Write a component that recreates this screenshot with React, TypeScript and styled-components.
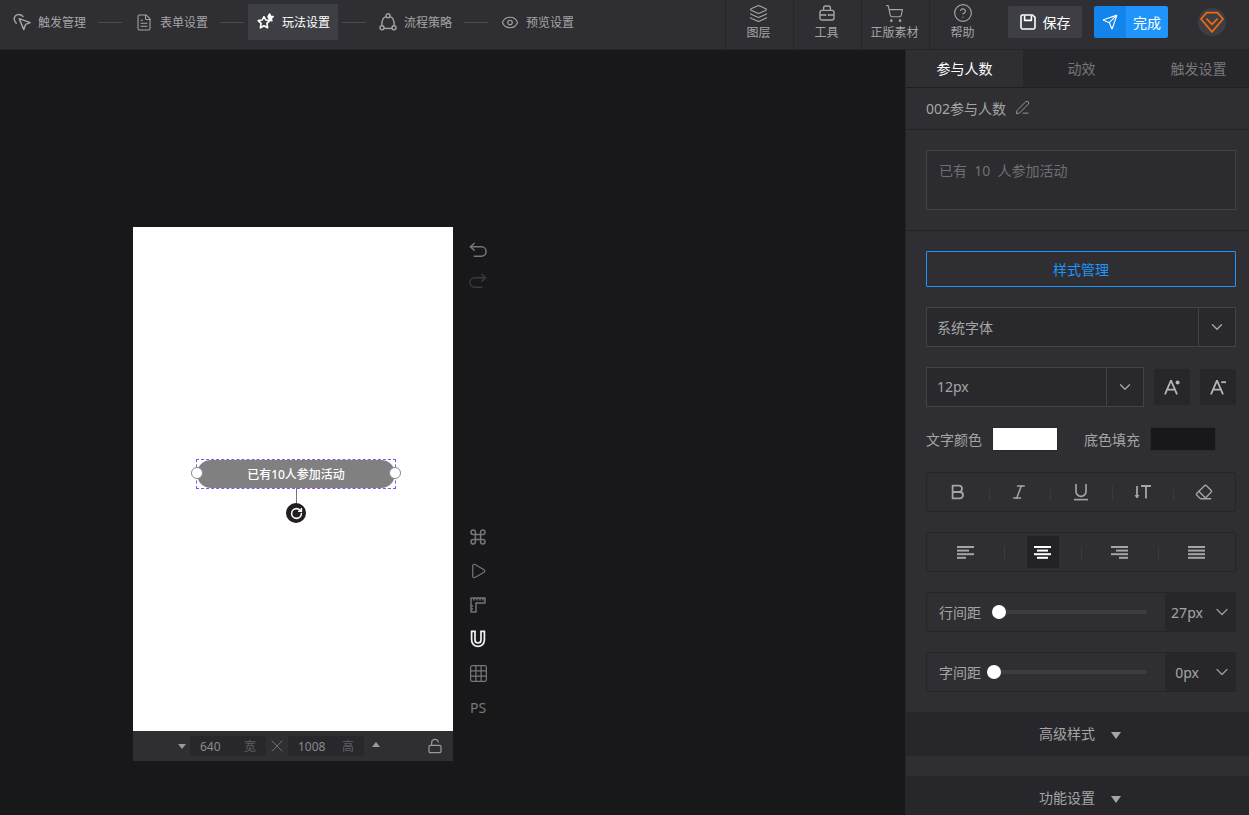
import React from 'react'
import styled, { createGlobalStyle } from 'styled-components'
import { ChevronDown, CircleHelp, Eraser, Eye, FileText, Grid3x3, Italic, Layers, LockOpen, PenLine, Play, RotateCw, Send, ShoppingCart, X } from 'lucide-react'

const GlobalStyle = createGlobalStyle`
    * { box-sizing: border-box; }
    html, body { margin: 0; height: 100%; background: #18181a; overflow: hidden; }
    body { font-family: "Noto Sans", "Noto Sans CJK SC", sans-serif; font-size: 14px; color: #aaa; }
`

const PointerIcon = () => (
    <svg width="18" height="18" viewBox="0 0 18 18" fill="none" stroke="currentColor" strokeWidth="1.5" strokeLinejoin="round" strokeLinecap="round">
        <path d="M3.2 10.2A6 6 0 0 1 1.2 5.8 4.4 4.4 0 0 1 5.6 1.4a6 6 0 0 1 4.4 2" />
        <path d="M6.2 5.6l11 4-4.6 1.8-1.8 5.2z" />
    </svg>
)

const StarsIcon = () => (
    <svg width="18" height="18" viewBox="0 0 18 18" fill="none" stroke="currentColor" strokeWidth="1.6" strokeLinejoin="round">
        <path d="M7 3.6l1.8 3.4 4 .6-2.9 2.8.7 4.4-3.6-2-3.6 2 .7-4.4L1.2 7.6l4-.6z" />
        <path d="M12.6 1l1 2.2 2.6.3-1.9 1.8.5 2.5-2.2-1.2-1.6-2.8z" fill="currentColor" />
    </svg>
)

const FlowIcon = () => (
    <svg width="18" height="18" viewBox="0 0 18 18" fill="none" stroke="currentColor" strokeWidth="1.4">
        <path d="M6.8 3.6C4 4.6 2.6 7.6 2.8 12.6" />
        <path d="M11.2 3.6c2.8 1 4.2 4 4 9" />
        <path d="M5 15.4h8" />
        <circle cx="9" cy="2.8" r="2" />
        <circle cx="3" cy="14.8" r="2" />
        <circle cx="15" cy="14.8" r="2" />
    </svg>
)

const ToolboxIcon = () => (
    <svg width="16" height="16" viewBox="0 0 16 16" fill="none" stroke="currentColor" strokeWidth="1.4">
        <path d="M4.6 5.4V3A2 2 0 0 1 6.6 1h2.8a2 2 0 0 1 2 2v2.4" />
        <rect x="1" y="5.4" width="14" height="9.6" rx="2" />
        <path d="M1 10h4.6M10.4 10H15M6.4 9v2M9.6 9v2" />
    </svg>
)

const SaveBoxIcon = () => (
    <svg width="16" height="16" viewBox="0 0 16 16" fill="none" stroke="currentColor" strokeWidth="1.6" strokeLinejoin="round">
        <path d="M2.4 1h10.2L15 3.4v9.8A1.8 1.8 0 0 1 13.2 15H2.8A1.8 1.8 0 0 1 1 13.2V2.4A1.4 1.4 0 0 1 2.4 1z" />
        <path d="M4.6 1.4v5h6.8v-5" />
    </svg>
)

const GemLogo = () => (
    <svg width="28" height="28" viewBox="0 0 28 28" fill="none">
        <circle cx="14" cy="14" r="14" fill="#3d3e44" />
        <path d="M8.6 4.6h10.8l5.6 6.4L14 23.8 3 11z" stroke="#f0680c" strokeWidth="1.8" strokeLinejoin="round" />
        <path d="M8.4 10.6l5.6 5.8 5.6-5.8" stroke="#f0680c" strokeWidth="1.8" strokeLinejoin="round" />
    </svg>
)

const HistoryIcon = ({ flip }: { flip?: boolean }) => (
    <svg width="18" height="16" viewBox="0 0 18 16" fill="none" stroke="currentColor" strokeWidth="1.5" transform={flip ? 'scale(-1 1)' : undefined}>
        <path d="M5.6 1L1.4 4.8l4.2 3.8" />
        <path d="M1.4 4.8h11a4.4 4.4 0 0 1 0 9.4H4.6" />
    </svg>
)

const CommandIcon = () => (
    <svg width="16" height="16" viewBox="0 0 16 16" fill="none" stroke="currentColor" strokeWidth="1.5">
        <path d="M5.4 5.4h5.2v5.2H5.4zM5.4 5.4V3.2a2.2 2.2 0 1 0-2.2 2.2zM10.6 5.4h2.2a2.2 2.2 0 1 0-2.2-2.2zM5.4 10.6H3.2a2.2 2.2 0 1 0 2.2 2.2zM10.6 10.6v2.2a2.2 2.2 0 1 0 2.2-2.2z" />
    </svg>
)

const RulerIcon = () => (
    <svg width="16" height="16" viewBox="0 0 16 16" fill="none" stroke="currentColor" strokeWidth="1.4" strokeLinejoin="round">
        <path d="M1 1h14v5H6v9H1z" />
        <path d="M4 1v2.4M7 1v2.4M10 1v2.4M13 1v2.4M1 9h2M1 12h2" />
    </svg>
)

const MagnetIcon = () => (
    <svg width="16" height="18" viewBox="0 0 16 18" fill="none" stroke="currentColor" strokeWidth="1.7">
        <path d="M1.6 1.4h3.4v8.6a3 3 0 0 0 6 0V1.4h3.4V10a6.4 6.4 0 0 1-12.8 0z" />
    </svg>
)

const BoldIcon = () => (
    <svg width="16" height="16" viewBox="0 0 16 16" fill="none" stroke="currentColor" strokeWidth="1.8">
        <path d="M2.6 1.6h6.2a3.2 3.2 0 0 1 0 6.4H2.6zM2.6 8h7.2a3.2 3.2 0 0 1 0 6.4H2.6z" />
    </svg>
)

const UnderlineIcon = () => (
    <svg width="16" height="18" viewBox="0 0 16 18" fill="none" stroke="currentColor" strokeWidth="1.6">
        <path d="M3 1v7.4a5 5 0 0 0 10 0V1" />
        <path d="M1 16.6h14" />
    </svg>
)

const SpacingIcon = () => (
    <svg width="18" height="16" viewBox="0 0 18 16" fill="none" stroke="currentColor" strokeWidth="1.8">
        <path d="M7 2h10M12 2v12.6M3 2v11" />
        <path d="M1 11l2 3 2-3" fill="currentColor" strokeWidth="1" />
    </svg>
)

const GrowIcon = ({ plus }: { plus?: boolean }) => (
    <svg width="17" height="16" viewBox="0 0 17 16" fill="none" stroke="currentColor" strokeWidth="1.8">
        <path d="M1 15.4L6.8 2h.4l5.8 13.4M3.2 10.6h7.6" />
        {plus ? <circle cx="13.6" cy="3.4" r="2" fill="currentColor" stroke="none" /> : <path d="M11.2 3.2h4.8" />}
    </svg>
)

const ALIGN_LINES = {
    left: [[0, 17], [0, 12], [0, 17], [0, 9]],
    center: [[0, 17], [3, 11], [0, 17], [3, 11]],
    right: [[0, 17], [5, 12], [0, 17], [8, 9]],
    justify: [[0, 17], [0, 17], [0, 17], [0, 17]],
}

const AlignIcon = ({ mode }: { mode: keyof typeof ALIGN_LINES }) => (
    <svg width="17" height="13" viewBox="0 0 17 13" fill="currentColor">
        {ALIGN_LINES[mode].map(([x, w], i) => (
            <rect key={i} x={x} y={i * 3.6} width={w} height="2" />
        ))}
    </svg>
)

const STEPS = [
    { label: '触发管理', icon: <PointerIcon /> },
    { label: '表单设置', icon: <FileText size={21} strokeWidth={1.4} /> },
    { label: '玩法设置', icon: <StarsIcon />, active: true },
    { label: '流程策略', icon: <FlowIcon /> },
    { label: '预览设置', icon: <Eye size={19} strokeWidth={1.5} /> },
]

const TOOLS = [
    { label: '图层', icon: <Layers size={19} strokeWidth={1.4} /> },
    { label: '工具', icon: <ToolboxIcon /> },
    { label: '正版素材', icon: <ShoppingCart size={19} strokeWidth={1.4} /> },
    { label: '帮助', icon: <CircleHelp size={20} strokeWidth={1.4} /> },
]

const App = () => {
    return (
        <Page>
            <GlobalStyle />
            <Header>
                <Steps>
                    {STEPS.map((step, i) => (
                        <React.Fragment key={step.label}>
                            {i > 0 && <StepLine />}
                            <Step $active={step.active}>
                                <StepIcon>{step.icon}</StepIcon>
                                <span>{step.label}</span>
                            </Step>
                        </React.Fragment>
                    ))}
                </Steps>
                <HeaderRight>
                    {TOOLS.map((tool) => (
                        <Tool key={tool.label}>
                            <ToolIcon>{tool.icon}</ToolIcon>
                            <span>{tool.label}</span>
                        </Tool>
                    ))}
                    <SaveButton>
                        <SaveBoxIcon />
                        保存
                    </SaveButton>
                    <DoneButton>
                        <DoneIcon>
                            <Send size={16} strokeWidth={1.7} />
                        </DoneIcon>
                        <DoneLabel>完成</DoneLabel>
                    </DoneButton>
                    <Logo>
                        <GemLogo />
                    </Logo>
                </HeaderRight>
            </Header>
            <Main>
                <Stage>
                    <Phone>
                        <Canvas>
                            <Selection>
                                <Pill>已有10人参加活动</Pill>
                                <Handle $side="left" />
                                <Handle $side="right" />
                                <RotateStem />
                                <RotateKnob>
                                    <RotateCw size={13} strokeWidth={2.8} />
                                </RotateKnob>
                            </Selection>
                        </Canvas>
                        <SizeBar>
                            <TriangleDown />
                            <SizeField>
                                <span>640</span>
                                <SizeUnit>宽</SizeUnit>
                            </SizeField>
                            <SizeCross>
                                <X size={20} strokeWidth={1.1} />
                            </SizeCross>
                            <SizeField>
                                <span>1008</span>
                                <SizeUnit>高</SizeUnit>
                            </SizeField>
                            <TriangleUp />
                            <SizeLock>
                                <LockOpen size={16} strokeWidth={1.8} />
                            </SizeLock>
                        </SizeBar>
                    </Phone>
                    <SideTools>
                        <ToolGroup>
                            <HistoryButton>
                                <HistoryIcon />
                            </HistoryButton>
                            <HistoryButton $disabled>
                                <HistoryIcon flip />
                            </HistoryButton>
                        </ToolGroup>
                        <ToolGroup>
                            <SideButton>
                                <CommandIcon />
                            </SideButton>
                            <SideButton>
                                <Play size={18} strokeWidth={1.6} />
                            </SideButton>
                            <SideButton>
                                <RulerIcon />
                            </SideButton>
                            <SideButton $on>
                                <MagnetIcon />
                            </SideButton>
                            <SideButton>
                                <Grid3x3 size={21} strokeWidth={1.4} />
                            </SideButton>
                            <SideButton>PS</SideButton>
                        </ToolGroup>
                    </SideTools>
                </Stage>
                <Panel>
                    <Tabs>
                        <Tab $active>参与人数</Tab>
                        <Tab>动效</Tab>
                        <Tab>触发设置</Tab>
                    </Tabs>
                    <NameRow>
                        002参与人数
                        <PenLine size={15} strokeWidth={1.4} />
                    </NameRow>
                    <TextSection>
                        <TextBox>已有&nbsp;&nbsp;10&nbsp;&nbsp;人参加活动</TextBox>
                    </TextSection>
                    <StyleSection>
                        <StyleButton>样式管理</StyleButton>
                        <Select>
                            <SelectValue>系统字体</SelectValue>
                            <SelectArrow>
                                <ChevronDown size={18} strokeWidth={1.8} />
                            </SelectArrow>
                        </Select>
                        <SizeRow>
                            <Select>
                                <SelectValue>12px</SelectValue>
                                <SelectArrow>
                                    <ChevronDown size={18} strokeWidth={1.8} />
                                </SelectArrow>
                            </Select>
                            <SquareButton>
                                <GrowIcon plus />
                            </SquareButton>
                            <SquareButton>
                                <GrowIcon />
                            </SquareButton>
                        </SizeRow>
                        <ColorRow>
                            <span>文字颜色</span>
                            <Swatch $color="#ffffff" />
                            <FillLabel>底色填充</FillLabel>
                            <Swatch $color="#18181a" />
                        </ColorRow>
                        <ButtonStrip>
                            <StripCell><BoldIcon /></StripCell>
                            <StripCell><Italic size={18} strokeWidth={2} /></StripCell>
                            <StripCell><UnderlineIcon /></StripCell>
                            <StripCell><SpacingIcon /></StripCell>
                            <StripCell><Eraser size={18} strokeWidth={1.8} /></StripCell>
                        </ButtonStrip>
                        <ButtonStrip>
                            <StripCell><AlignIcon mode="left" /></StripCell>
                            <StripCell><ActiveAlign><AlignIcon mode="center" /></ActiveAlign></StripCell>
                            <StripCell><AlignIcon mode="right" /></StripCell>
                            <StripCell><AlignIcon mode="justify" /></StripCell>
                        </ButtonStrip>
                        <SliderRow>
                            <SliderLabel>行间距</SliderLabel>
                            <SliderTrack>
                                <SliderThumb $left={0} />
                            </SliderTrack>
                            <SliderValue>
                                <ValueText>27px</ValueText>
                                <ChevronDown size={20} strokeWidth={1.5} />
                            </SliderValue>
                        </SliderRow>
                        <SliderRow>
                            <SliderLabel>字间距</SliderLabel>
                            <SliderTrack $tight>
                                <SliderThumb $left={0} />
                            </SliderTrack>
                            <SliderValue>
                                <ValueText>0px</ValueText>
                                <ChevronDown size={20} strokeWidth={1.5} />
                            </SliderValue>
                        </SliderRow>
                    </StyleSection>
                    <Fold>
                        高级样式
                        <FoldArrow />
                    </Fold>
                    <FoldGap />
                    <Fold>
                        功能设置
                        <FoldArrow />
                    </Fold>
                </Panel>
            </Main>
        </Page>
    )
}

const Page = styled.div`
    display: flex;
    flex-direction: column;
    width: 100%;
    height: 100vh;
    overflow: hidden;
`

const Header = styled.header`
    display: flex;
    align-items: flex-start;
    justify-content: space-between;
    flex: none;
    height: 50px;
    padding-left: 4px;
    background: #2e2e33;
    border-bottom: 1px solid #26262a;
`

const Steps = styled.div`
    display: flex;
    align-items: center;
    padding-top: 4px;
`

const Step = styled.div<{ $active?: boolean }>`
    display: flex;
    align-items: center;
    gap: 7px;
    width: 90px;
    height: 36px;
    padding-left: 9px;
    font-size: 12px;
    color: ${(p) => (p.$active ? '#fff' : '#a5a5a5')};
    background: ${(p) => (p.$active ? '#3e3f45' : 'transparent')};
`

const StepIcon = styled.div`
    display: flex;
    align-items: center;
    justify-content: center;
    width: 18px;
    height: 18px;
`

const StepLine = styled.div`
    width: 24px;
    height: 1px;
    margin: 0 4px;
    background: #4c4c50;
`

const HeaderRight = styled.div`
    display: flex;
    align-items: flex-start;
    height: 100%;
`

const Tool = styled.div`
    display: flex;
    flex-direction: column;
    align-items: center;
    width: 68px;
    height: 100%;
    padding: 3px 2px 0 0;
    font-size: 12px;
    line-height: 18px;
    color: #a5a5a5;
    border-left: 1px solid #27272b;
`

const ToolIcon = styled.div`
    display: flex;
    align-items: center;
    justify-content: center;
    height: 20px;
    margin-bottom: 1px;
`

const SaveButton = styled.div`
    display: flex;
    align-items: center;
    justify-content: center;
    gap: 7px;
    width: 74px;
    height: 32px;
    margin: 6px 0 0 11px;
    padding-bottom: 1px;
    border-radius: 2px;
    font-size: 14px;
    color: #fff;
    background: #3e3f45;
`

const DoneButton = styled.div`
    display: flex;
    width: 74px;
    height: 32px;
    margin: 6px 0 0 12px;
    border-radius: 2px;
    overflow: hidden;
    font-size: 14px;
    color: #fff;
`

const DoneIcon = styled.div`
    display: flex;
    align-items: center;
    justify-content: center;
    width: 32px;
    background: #1385ea;
`

const DoneLabel = styled.div`
    display: flex;
    align-items: center;
    justify-content: center;
    flex: 1;
    padding-bottom: 1px;
    background: #1f94fb;
`

const Logo = styled.div`
    display: flex;
    margin: 8px 23px 0 30px;
`

const Main = styled.div`
    display: flex;
    flex: 1;
    min-height: 0;
`

const Stage = styled.div`
    display: flex;
    align-items: flex-start;
    flex: 1;
    padding: 177px 0 0 133px;
    background: #18181a;
`

const Phone = styled.div`
    display: flex;
    flex-direction: column;
    width: 320px;
`

const Canvas = styled.div`
    position: relative;
    height: 504px;
    background: #fff;
`

const Selection = styled.div`
    position: absolute;
    left: 63px;
    top: 232px;
    width: 200px;
    height: 30px;
    border: 1px dashed #8f4ff0;
`

const Pill = styled.div`
    display: flex;
    align-items: center;
    justify-content: center;
    height: 100%;
    padding-bottom: 1px;
    border-radius: 14px;
    font-size: 12px;
    font-weight: 500;
    color: #fff;
    background: #808080;
`

const Handle = styled.div<{ $side: 'left' | 'right' }>`
    position: absolute;
    top: 7px;
    ${(p) => p.$side}: -6px;
    width: 12px;
    height: 12px;
    border-radius: 50%;
    background: #fff;
    border: 1px solid #8a8a8a;
`

const RotateStem = styled.div`
    position: absolute;
    left: 99px;
    top: 28px;
    width: 1px;
    height: 16px;
    background: #777;
`

const RotateKnob = styled.div`
    position: absolute;
    left: 89px;
    top: 43px;
    display: flex;
    align-items: center;
    justify-content: center;
    width: 20px;
    height: 20px;
    border-radius: 50%;
    color: #fff;
    background: #231f20;
`

const SizeBar = styled.div`
    display: flex;
    align-items: center;
    height: 30px;
    padding-left: 45px;
    font-size: 12px;
    color: #8a8a8a;
    background: #2e2e33;
`

const TriangleDown = styled.div`
    width: 0;
    height: 0;
    margin-right: 4px;
    border-left: 4px solid transparent;
    border-right: 4px solid transparent;
    border-top: 5px solid #9a9a9a;
`

const TriangleUp = styled.div`
    width: 0;
    height: 0;
    margin: 0 0 3px 8px;
    border-left: 4px solid transparent;
    border-right: 4px solid transparent;
    border-bottom: 5px solid #9a9a9a;
`

const SizeField = styled.div`
    display: flex;
    align-items: center;
    justify-content: space-between;
    width: 76px;
    height: 20px;
    padding: 0 10px;
    border-radius: 2px;
    background: #28282c;
`

const SizeUnit = styled.span`
    color: #5f5f63;
`

const SizeCross = styled.div`
    display: flex;
    justify-content: center;
    width: 22px;
    color: #77777b;
`

const SizeLock = styled.div`
    display: flex;
    margin-left: auto;
    margin-right: 10px;
    color: #9a9a9a;
`

const SideTools = styled.div`
    display: flex;
    flex-direction: column;
    justify-content: space-between;
    width: 50px;
    height: 504px;
    padding: 7px 0;
`

const ToolGroup = styled.div`
    display: flex;
    flex-direction: column;
    align-items: center;
`

const HistoryButton = styled.div<{ $disabled?: boolean }>`
    display: flex;
    align-items: center;
    justify-content: center;
    height: 31px;
    color: ${(p) => (p.$disabled ? '#3a3a3d' : '#77777a')};
`

const SideButton = styled.div<{ $on?: boolean }>`
    display: flex;
    align-items: center;
    justify-content: center;
    height: 34px;
    font-size: 14px;
    color: ${(p) => (p.$on ? '#f2f2f2' : '#77777a')};
`

const Panel = styled.aside`
    display: flex;
    flex-direction: column;
    flex: none;
    width: 344px;
    background: #2e2e33;
    border-left: 1px solid #26262a;
`

const Tabs = styled.div`
    display: flex;
    flex: none;
    height: 38px;
    overflow: hidden;
    border-bottom: 1px solid #1f1f22;
    background: #27272b;
`

const Tab = styled.div<{ $active?: boolean }>`
    display: flex;
    align-items: center;
    justify-content: center;
    flex: none;
    width: 117px;
    padding-bottom: 1px;
    color: ${(p) => (p.$active ? '#fff' : '#77777a')};
    background: ${(p) => (p.$active ? '#2e2e33' : 'transparent')};
`

const NameRow = styled.div`
    display: flex;
    align-items: center;
    gap: 9px;
    flex: none;
    height: 42px;
    padding: 0 0 2px 20px;
    color: #a5a5a5;
    border-bottom: 1px solid #232326;
`

const TextSection = styled.div`
    flex: none;
    height: 101px;
    padding: 20px 13px 0 20px;
    border-bottom: 1px solid #232326;
`

const TextBox = styled.div`
    height: 60px;
    padding: 10px 12px;
    line-height: 20px;
    color: #6f6f72;
    background: #2b2b30;
    border: 1px solid #434347;
`

const StyleSection = styled.div`
    display: flex;
    flex-direction: column;
    flex: none;
    gap: 20px;
    height: 481px;
    padding: 20px 13px 0 20px;
`

const StyleButton = styled.div`
    display: flex;
    align-items: center;
    justify-content: center;
    flex: none;
    height: 36px;
    color: #1f94fb;
    border: 1px solid #1f94fb;
    border-radius: 1px;
`

const Select = styled.div`
    display: flex;
    width: 100%;
    min-width: 0;
    height: 40px;
    flex: 0 1 auto;
    background: #29292d;
    border: 1px solid #434347;
`

const SelectValue = styled.div`
    display: flex;
    align-items: center;
    flex: 1;
    padding: 0 0 1px 10px;
    color: #a5a5a5;
`

const SelectArrow = styled.div`
    display: flex;
    align-items: center;
    justify-content: center;
    width: 37px;
    color: #a5a5a5;
    border-left: 1px solid #434347;
`

const SizeRow = styled.div`
    display: flex;
    align-items: center;
    flex: none;
    gap: 10px;
`

const SquareButton = styled.div`
    display: flex;
    align-items: center;
    justify-content: center;
    flex: none;
    width: 36px;
    height: 36px;
    border-radius: 2px;
    color: #b5b5b5;
    background: #27272b;
`

const ColorRow = styled.div`
    display: flex;
    align-items: center;
    flex: none;
    height: 24px;
    margin-bottom: 1px;
    color: #a5a5a5;
`

const FillLabel = styled.span`
    margin-left: 26px;
`

const Swatch = styled.div<{ $color: string }>`
    width: 66px;
    height: 24px;
    margin-left: 10px;
    background: ${(p) => p.$color};
    border: 1px solid #2a2a2e;
`

const ButtonStrip = styled.div`
    display: flex;
    align-items: center;
    flex: none;
    height: 40px;
    border: 1px solid #262629;
    border-radius: 2px;
`

const StripCell = styled.div`
    position: relative;
    display: flex;
    align-items: center;
    justify-content: center;
    flex: 1;
    height: 100%;
    color: #a5a5a5;
    & + &::before {
        content: '';
        position: absolute;
        left: 0;
        top: 13px;
        width: 1px;
        height: 14px;
        background: #3a3a3e;
    }
`

const ActiveAlign = styled.div`
    display: flex;
    align-items: center;
    justify-content: center;
    width: 32px;
    height: 32px;
    color: #fff;
    background: #232326;
`

const SliderRow = styled.div`
    display: flex;
    align-items: center;
    flex: none;
    height: 40px;
    border: 1px solid #262629;
    border-radius: 2px;
`

const SliderLabel = styled.div`
    width: 53px;
    margin-left: 12px;
    white-space: nowrap;
    color: #a5a5a5;
`

const SliderTrack = styled.div<{ $tight?: boolean }>`
    position: relative;
    flex: 1;
    height: 4px;
    margin: 0 18px 0 ${(p) => (p.$tight ? '-5px' : '0')};
    border-radius: 2px;
    background: #3c3c41;
`

const SliderThumb = styled.div<{ $left: number }>`
    position: absolute;
    left: ${(p) => p.$left}px;
    top: -5px;
    width: 14px;
    height: 14px;
    border-radius: 50%;
    background: #fff;
`

const SliderValue = styled.div`
    display: flex;
    align-items: center;
    flex: none;
    width: 70px;
    height: 100%;
    padding-right: 3px;
    color: #9a9a9a;
    background: #27272b;
`

const ValueText = styled.span`
    flex: 1;
    padding-right: 3px;
    text-align: center;
    color: #a5a5a5;
`

const Fold = styled.div`
    display: flex;
    align-items: center;
    justify-content: center;
    gap: 16px;
    flex: none;
    height: 44px;
    padding: 0 0 3px 5px;
    color: #a5a5a5;
    background: #27272b;
`

const FoldArrow = styled.div`
    width: 0;
    height: 0;
    margin-top: 6px;
    border-left: 5px solid transparent;
    border-right: 5px solid transparent;
    border-top: 7px solid #a5a5a5;
`

const FoldGap = styled.div`
    flex: none;
    height: 20px;
`

export default App
